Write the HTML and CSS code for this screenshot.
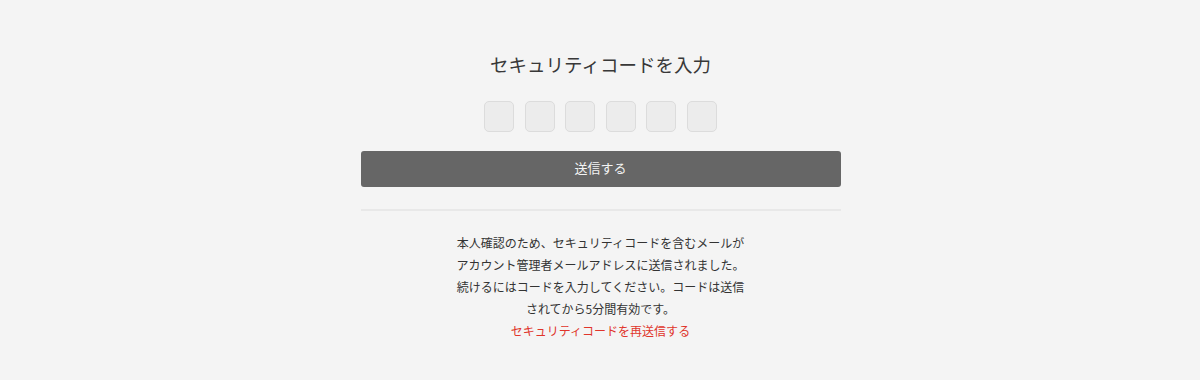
FILE: index.html
```html
<!DOCTYPE html>
<html lang="ja">
<head>
<meta charset="utf-8">
<link rel="stylesheet" href="styles.css">
</head>
<body>
<main class="page">
  <section class="panel">
    <h1 class="title">セキュリティコードを入力</h1>
    <div class="code">
      <input class="digit" type="text" maxlength="1">
      <input class="digit" type="text" maxlength="1">
      <input class="digit" type="text" maxlength="1">
      <input class="digit" type="text" maxlength="1">
      <input class="digit" type="text" maxlength="1">
      <input class="digit" type="text" maxlength="1">
    </div>
    <button class="submit" type="button">送信する</button>
    <hr class="divider">
    <p class="note">本人確認のため、セキュリティコードを含むメールがアカウント管理者メールアドレスに送信されました。続けるにはコードを入力してください。コードは送信されてから5分間有効です。</p>
    <a class="resend" href="#">セキュリティコードを再送信する</a>
  </section>
</main>
</body>
</html>
```
FILE: styles.css
```css
* { box-sizing: border-box; }
html, body {
  margin: 0;
  padding: 0;
  background: #f4f4f4;
  font-family: "Noto Sans CJK JP", "Noto Sans", sans-serif;
  color: #333;
}
.page {
  display: flex;
  justify-content: center;
  padding-top: 47px;
  padding-left: 1px;
}
.panel {
  width: 480px;
  display: flex;
  flex-direction: column;
  align-items: center;
}
.title {
  margin: 0;
  font-size: 18.5px;
  font-weight: 400;
  line-height: 34px;
  color: #383838;
}
.code {
  display: flex;
  gap: 10.6px;
  margin-top: 20px;
}
.digit {
  width: 30px;
  height: 31px;
  border: 1px solid #dcdcdc;
  border-radius: 5px;
  background: #ececec;
  padding: 0;
}
.submit {
  margin-top: 19px;
  width: 480px;
  height: 36px;
  padding: 0 0 3px;
  border: none;
  border-radius: 3px;
  background: #666666;
  color: #f4f4f4;
  font-family: inherit;
  font-size: 13px;
}
.divider {
  width: 480px;
  margin: 22px 0 0;
  border: none;
  border-top: 2px solid #e8e8e8;
}
.note {
  margin: 21px 0 0;
  width: 296px;
  text-align: center;
  font-size: 12px;
  line-height: 22px;
  color: #333;
}
.resend {
  font-size: 12px;
  line-height: 22px;
  color: #e0352b;
  text-decoration: none;
}
```
